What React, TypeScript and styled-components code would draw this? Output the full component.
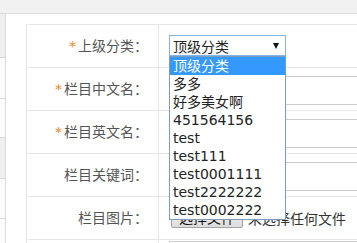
import styled, { createGlobalStyle } from 'styled-components';

const GlobalStyle = createGlobalStyle`
    html, body {
        margin: 0;
        padding: 0;
        background: #fff;
        overflow: hidden;
    }
    body {
        font-family: 'DejaVu Sans', 'Noto Sans CJK SC', sans-serif;
    }
`;

const Page = styled.div`
    width: 357px;
    height: 243px;
    overflow: hidden;
`;

const TopBar = styled.div`
    height: 13px;
    background: #f1f1f1;
    border-bottom: 1px solid #dcdcdc;
`;

const Body = styled.div`
    display: flex;
`;

const Sidebar = styled.div`
    width: 5px;
    flex-shrink: 0;
    border-right: 1px solid #dcdcdc;
    display: flex;
    flex-direction: column;
`;

const SideItem = styled.div<{ $h: number; $active?: boolean }>`
    height: ${(p) => p.$h}px;
    background: ${(p) => (p.$active ? '#efefef' : '#fbfbfb')};
    border-bottom: 1px solid #dadada;
`;

const Content = styled.div`
    flex: 1;
    padding: 10px 0 0 20px;
`;

const FormTable = styled.div`
    display: grid;
    grid-template-columns: 132px 520px;
    grid-auto-rows: 43px;
    border-top: 1px solid #e6e6e6;
    border-left: 1px solid #e6e6e6;
    width: max-content;
`;

const LabelCell = styled.div`
    border-right: 1px solid #e6e6e6;
    border-bottom: 1px solid #e6e6e6;
    display: flex;
    align-items: center;
    justify-content: flex-end;
    padding-right: 10px;
    font-size: 14px;
    line-height: 18px;
    color: #555;
`;

const Star = styled.span`
    color: #ef8424;
    font-size: 14px;
    margin-right: 2px;
    vertical-align: -4px;
`;

const FieldCell = styled.div<{ $align?: string; $top?: number }>`
    border-right: 1px solid #e6e6e6;
    border-bottom: 1px solid #e6e6e6;
    display: flex;
    align-items: ${(p) => p.$align || 'flex-start'};
    padding-left: 10px;
    padding-top: ${(p) => p.$top ?? 0}px;
`;

const TextInput = styled.div`
    box-sizing: border-box;
    width: 360px;
    height: 29px;
    border: 1px solid #cccccc;
    background: #fff;
`;

const SelectWrap = styled.div`
    position: relative;
`;

const SelectBox = styled.div`
    box-sizing: border-box;
    width: 117px;
    height: 21px;
    border: 1px solid #7eb4ea;
    background: #fff;
    display: flex;
    align-items: center;
    justify-content: space-between;
    padding: 0 6px 0 3px;
    font-size: 14px;
    color: #222;
`;

const Arrow = styled.span`
    width: 0;
    height: 0;
    border-left: 3px solid transparent;
    border-right: 3px solid transparent;
    border-top: 6px solid #111;
`;

const OptionList = styled.ul`
    position: absolute;
    top: 100%;
    left: 0;
    box-sizing: border-box;
    width: 117px;
    margin: 0;
    padding: 0;
    list-style: none;
    background: #fff;
    border: 1px solid #7f9db9;
    z-index: 10;
`;

const Option = styled.li<{ $selected?: boolean }>`
    height: 18px;
    line-height: 18px;
    padding-left: 3px;
    font-size: 14px;
    white-space: nowrap;
    color: ${(p) => (p.$selected ? '#fff' : '#222')};
    background: ${(p) => (p.$selected ? '#3399ff' : 'transparent')};
`;

const FileButton = styled.div`
    box-sizing: border-box;
    height: 20px;
    margin-left: 2px;
    padding: 0 7px;
    border: 1px solid #a3a3a3;
    border-radius: 2px;
    background: linear-gradient(#f4f4f4, #dcdcdc);
    font-size: 14px;
    line-height: 18px;
    color: #111;
`;

const FileText = styled.span`
    margin-left: 5px;
    font-size: 14px;
    color: #333;
`;

const options = [
    '顶级分类',
    '多多',
    '好多美女啊',
    '451564156',
    'test',
    'test111',
    'test0001111',
    'test2222222',
    'test0002222',
];

const sideItems = [
    { h: 43, active: true },
    { h: 40 },
    { h: 38 },
    { h: 40, active: true },
    { h: 39 },
    { h: 40 },
];

export default function App() {
    return (
        <Page>
            <GlobalStyle />
            <TopBar />
            <Body>
                <Sidebar>
                    {sideItems.map((s, i) => (
                        <SideItem key={i} $h={s.h} $active={s.active} />
                    ))}
                </Sidebar>
                <Content>
                    <FormTable>
                        <LabelCell>
                            <Star>*</Star>上级分类：
                        </LabelCell>
                        <FieldCell $top={10}>
                            <SelectWrap>
                                <SelectBox>
                                    <span>顶级分类</span>
                                    <Arrow />
                                </SelectBox>
                                <OptionList>
                                    {options.map((o, i) => (
                                        <Option key={o} $selected={i === 0}>
                                            {o}
                                        </Option>
                                    ))}
                                </OptionList>
                            </SelectWrap>
                        </FieldCell>

                        <LabelCell>
                            <Star>*</Star>栏目中文名：
                        </LabelCell>
                        <FieldCell $top={8}>
                            <TextInput />
                        </FieldCell>

                        <LabelCell>
                            <Star>*</Star>栏目英文名：
                        </LabelCell>
                        <FieldCell $top={8}>
                            <TextInput />
                        </FieldCell>

                        <LabelCell>栏目关键词：</LabelCell>
                        <FieldCell $top={8}>
                            <TextInput />
                        </FieldCell>

                        <LabelCell>栏目图片：</LabelCell>
                        <FieldCell $align="center">
                            <FileButton>选择文件</FileButton>
                            <FileText>未选择任何文件</FileText>
                        </FieldCell>

                        <LabelCell />
                        <FieldCell $top={1}>
                            <TextInput />
                        </FieldCell>
                    </FormTable>
                </Content>
            </Body>
        </Page>
    );
}
